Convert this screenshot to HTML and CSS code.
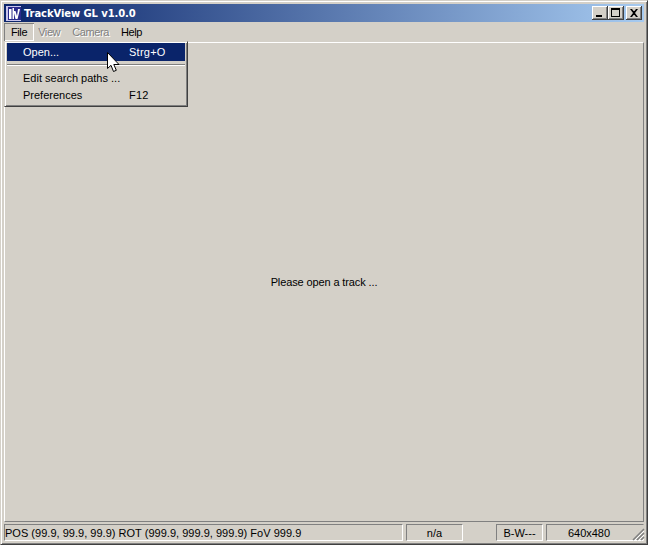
FILE: index.html
```html
<!DOCTYPE html>
<html lang="en">
<head>
<meta charset="utf-8">
<title>TrackView GL v1.0.0</title>
<link rel="stylesheet" href="styles.css">
</head>
<body>
<div class="window">
  <header class="titlebar">
    <svg class="appicon" width="15" height="15" viewBox="0 0 15 15">
      <rect width="15" height="15" fill="#c8c4ec"/>
      <rect x="2" y="1" width="13" height="13" fill="#2a2a8c"/>
      <path d="M3 3h2.500v10H3zM6.500 2h1.500v3h1.500l1.500 5L12 3h2l-2.500 10h-2L8 7v6H6.500z" fill="#fff"/>
    </svg>
    <span class="title">TrackView GL v1.0.0</span>
    <div class="caption-buttons">
      <button class="capbtn"><svg width="16" height="14" viewBox="0 0 16 14"><rect x="4" y="9" width="6" height="2" fill="#000"/></svg></button>
      <button class="capbtn"><svg width="16" height="14" viewBox="0 0 16 14"><path d="M3 2h9v9H3z M4 4v6h7V4z" fill="#000" fill-rule="evenodd"/></svg></button>
      <button class="capbtn capclose"><svg width="16" height="14" viewBox="0 0 16 14"><path d="M4 3h2l1.500 2h1L10 3h2L9 7l3 4h-2L8.500 9h-1L6 11H4l3-4z" fill="#000"/></svg></button>
    </div>
  </header>
  <nav class="menubar">
    <span class="menuitem open">File</span>
    <span class="menuitem disabled">View</span>
    <span class="menuitem disabled">Camera</span>
    <span class="menuitem">Help</span>
  </nav>
  <main class="client"><span class="prompt">Please open a track ...</span></main>
  <footer class="statusbar">
    <div class="pane pane-pos">POS (99.9, 99.9, 99.9) ROT (999.9, 999.9, 999.9) FoV 999.9</div>
    <div class="pane pane-na">n/a</div>
    <div class="pane pane-flags">B-W---</div>
    <div class="pane pane-res">640x480
      <svg class="grip" width="13" height="13" viewBox="0 0 13 13">
        <path d="M12 1L1 12M12 5L5 12M12 9L9 12" stroke="#808080" stroke-width="1.500" fill="none"/>
        <path d="M12 3L3 12M12 7L7 12M12 11L11 12" stroke="#fff" stroke-width="1" fill="none"/>
      </svg>
    </div>
  </footer>
  <div class="dropdown">
    <div class="dd-row selected"><span>Open...</span><span class="accel">Strg+O</span></div>
    <div class="sep"></div>
    <div class="dd-row"><span>Edit search paths ...</span></div>
    <div class="dd-row"><span>Preferences</span><span class="accel">F12</span></div>
  </div>
  <svg class="cursor" width="13" height="21" viewBox="0 0 13 21">
    <path d="M.5.500V16.500l3.500-3.200L6.500 19.500l2.800-1.200-2.500-5.800H12z" fill="#fff" stroke="#000" stroke-width="1"/>
  </svg>
</div>
</body>
</html>
```
FILE: styles.css
```css
* { box-sizing: border-box; }
html, body { margin: 0; padding: 0; }
body {
  width: 648px;
  height: 545px;
  overflow: hidden;
  font-family: "Liberation Sans", sans-serif;
  font-size: 11px;
  color: #000;
  background: #d4d0c8;
}
.window {
  position: relative;
  width: 648px;
  height: 545px;
  padding: 3px;
  background: #d4d0c8;
  display: flex;
  flex-direction: column;
  border: 1px solid;
  border-color: #d4d0c8 #404040 #404040 #d4d0c8;
  box-shadow: inset 1px 1px 0 #fff, inset -1px -1px 0 #808080;
}
.titlebar {
  height: 18px;
  flex: none;
  display: flex;
  align-items: center;
  padding: 0 2px;
  background: linear-gradient(90deg, #0a246a, #a6caf0);
  color: #fff;
}
.appicon { flex: none; }
.title {
  margin-left: 3px;
  font-family: "DejaVu Sans", sans-serif;
  font-weight: 700;
  font-size: 10px;
  letter-spacing: -0.1px;
}
.caption-buttons { margin-left: auto; display: flex; }
.capbtn {
  width: 16px;
  height: 14px;
  padding: 0;
  border: 0;
  background: #d4d0c8;
  box-shadow: inset -1px -1px 0 #404040, inset 1px 1px 0 #fff, inset -2px -2px 0 #808080;
  display: block;
}
.capbtn svg { display: block; }
.capclose { margin-left: 2px; }
.menubar {
  height: 20px;
  flex: none;
  display: flex;
  align-items: center;
  letter-spacing: -0.4px;
}
.menuitem { padding: 0 6px; line-height: 18px; height: 18px; }
.menuitem.open {
  padding: 0 7px;
  margin-right: -2px;
  box-shadow: inset 1px 1px 0 #808080, inset -1px -1px 0 #fff;
}
.menuitem.disabled { color: #808080; text-shadow: 1px 1px 0 #fff; }
.client {
  flex: 1;
  display: flex;
  align-items: center;
  justify-content: center;
  border: 1px solid;
  border-color: #fff #808080 #808080 #fff;
  background: #d4d0c8;
}
.prompt { letter-spacing: -0.12px; }
.statusbar {
  height: 17px;
  flex: none;
  margin-top: 2px;
  display: flex;
  gap: 3px;
}
.pane {
  height: 17px;
  line-height: 16px;
  border: 1px solid;
  border-color: #808080 #fff #fff #808080;
  text-align: center;
  white-space: nowrap;
}
.pane-pos { width: 399px; text-align: left; letter-spacing: 0.02px; }
.pane-na { width: 57px; }
.pane-flags { width: 47px; margin-left: 30px; }
.pane-res { flex: 1; position: relative; border-right-color: transparent; padding-right: 12px; }
.grip { position: absolute; right: -2px; bottom: -1px; }
.dropdown {
  position: absolute;
  left: 3px;
  top: 40px;
  width: 184px;
  height: 66px;
  padding: 1px 2px;
  background: #d4d0c8;
  border: 1px solid;
  border-color: #d4d0c8 #404040 #404040 #d4d0c8;
  box-shadow: inset 1px 1px 0 #fff, inset -1px -1px 0 #808080;
}
.dd-row {
  height: 17px;
  display: flex;
  align-items: center;
  padding-left: 16px;
  position: relative;
}
.dd-row.selected { height: 18px; background: #0a246a; color: #fff; }
.accel { position: absolute; left: 122px; letter-spacing: 0.25px; }
.sep { height: 2px; margin: 3px 0 3px; background: #808080; border-bottom: 1px solid #fff; }
.cursor { position: absolute; left: 106px; top: 51px; }
```
